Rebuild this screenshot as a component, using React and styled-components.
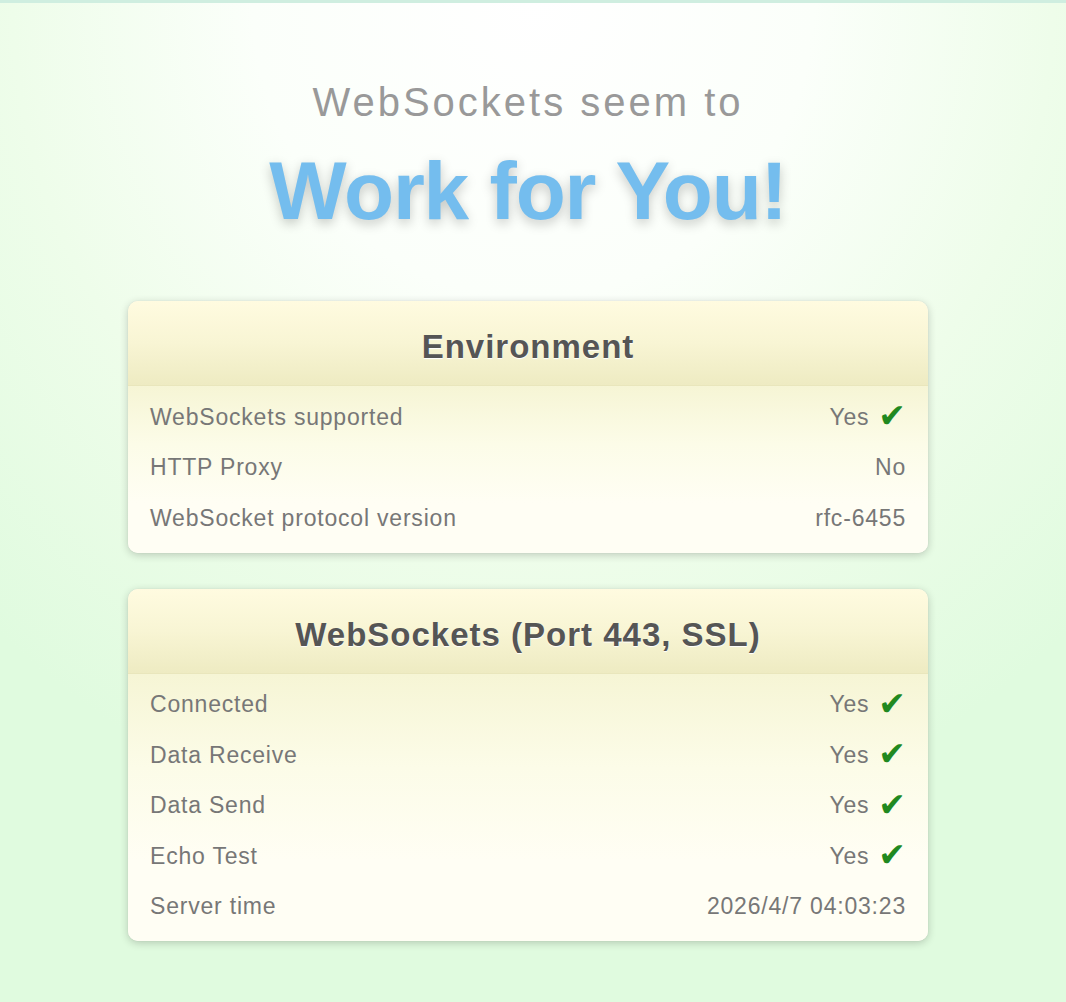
import React from "react";
import styled, { createGlobalStyle } from "styled-components";

const Global = createGlobalStyle`
  html, body {
    margin: 0;
    padding: 0;
  }
  body {
    font-family: "Liberation Sans", Arial, Helvetica, sans-serif;
    min-height: 1002px;
    background: radial-gradient(ellipse 75% 85% at 50% 0%, #ffffff 0%, #fbfffa 35%, #eefdea 65%, #e0fbdf 100%);
    background-color: #e0fbdf;
  }
`;

const Page = styled.div`
  border-top: 3px solid #cfeee0;
  min-height: 999px;
  padding: 0 10px 0 0;
  box-sizing: border-box;
  display: flex;
  flex-direction: column;
  align-items: center;
`;

const Intro = styled.h2`
  margin: 75px 0 0;
  font-size: 40px;
  line-height: 48px;
  font-weight: normal;
  letter-spacing: 3px;
  color: #999;
  text-align: center;
`;

const Headline = styled.h1`
  margin: 20px 0 0;
  font-size: 82px;
  line-height: 90px;
  font-weight: bold;
  letter-spacing: -1.2px;
  color: #74bdee;
  text-align: center;
  text-shadow: 0 4px 12px rgba(0, 0, 0, 0.22);
`;

const Cards = styled.div`
  margin-top: 65px;
  width: 800px;
  display: flex;
  flex-direction: column;
  gap: 36px;
`;

const Card = styled.section`
  border-radius: 10px;
  overflow: hidden;
  background: #fffef4;
  box-shadow: 0 2px 8px rgba(0, 0, 0, 0.2), 0 0 1px rgba(0, 0, 0, 0.15);
`;

const CardHeader = styled.h3`
  margin: 0;
  height: 85px;
  padding-top: 8px;
  display: flex;
  align-items: center;
  justify-content: center;
  font-size: 33px;
  letter-spacing: 1px;
  font-weight: bold;
  color: #555;
  text-shadow: 0 1px 1px #fff;
  background: linear-gradient(to bottom, #fffbe0 0%, #f8f5d4 50%, #eeebc2 100%);
  border-bottom: 1px solid #e9e6bc;
  box-sizing: border-box;
`;

const CardBody = styled.div`
  padding: 6px 0 9px;
  background: linear-gradient(to bottom, #f6f5d5 0%, #fcfce8 35%, #fffef4 70%);
`;

const Row = styled.div`
  height: 50.5px;
  padding: 0 22px;
  display: flex;
  align-items: center;
  justify-content: space-between;
  font-size: 23px;
  letter-spacing: 0.8px;
  color: #777;
`;

const Value = styled.span`
  display: flex;
  align-items: center;
  gap: 9px;
`;

const Check = styled.span`
  font-family: "DejaVu Sans", sans-serif;
  font-size: 33px;
  line-height: 1;
  color: #21891f;
  letter-spacing: 0;
  margin-top: -3px;
`;

const env = [
  ["WebSockets supported", "Yes", true],
  ["HTTP Proxy", "No", false],
  ["WebSocket protocol version", "rfc-6455", false],
];

const ws = [
  ["Connected", "Yes", true],
  ["Data Receive", "Yes", true],
  ["Data Send", "Yes", true],
  ["Echo Test", "Yes", true],
  ["Server time", "2026/4/7 04:03:23", false],
];

function InfoCard({ title, rows }) {
  return (
    <Card>
      <CardHeader>{title}</CardHeader>
      <CardBody>
        {rows.map(([label, value, ok]) => (
          <Row key={label}>
            <span>{label}</span>
            <Value>
              {value}
              {ok && <Check>✔</Check>}
            </Value>
          </Row>
        ))}
      </CardBody>
    </Card>
  );
}

export default function App() {
  return (
    <>
      <Global />
      <Page>
        <Intro>WebSockets seem to</Intro>
        <Headline>Work for You!</Headline>
        <Cards>
          <InfoCard title="Environment" rows={env} />
          <InfoCard title="WebSockets (Port 443, SSL)" rows={ws} />
        </Cards>
      </Page>
    </>
  );
}
